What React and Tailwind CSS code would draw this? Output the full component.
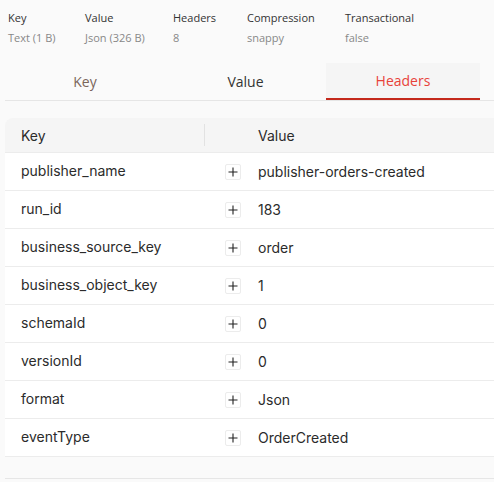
const meta = [
  { label: "Key", value: "Text (1 B)", w: "w-[77px]" },
  { label: "Value", value: "Json (326 B)", w: "w-[88px]" },
  { label: "Headers", value: "8", w: "w-[74px]" },
  { label: "Compression", value: "snappy", w: "w-[98px]" },
  { label: "Transactional", value: "false", w: "w-[100px]" },
];

const headers = [
  ["publisher_name", "publisher-orders-created"],
  ["run_id", "183"],
  ["business_source_key", "order"],
  ["business_object_key", "1"],
  ["schemaId", "0"],
  ["versionId", "0"],
  ["format", "Json"],
  ["eventType", "OrderCreated"],
];

const PlusBox = () => (
  <span className="flex h-[16px] w-[16px] items-center justify-center rounded-[2px] border border-[#ececec] bg-white">
    <svg width="10" height="10" viewBox="0 0 10 10">
      <path d="M5 0.5v9M0.5 5h9" stroke="#222" strokeWidth="1.1" />
    </svg>
  </span>
);

export default function App() {
  return (
    <div className="h-[482px] w-[494px] overflow-hidden bg-[#fafafa]">
      {/* message meta */}
      <div className="flex pl-[8px] pt-[10px] font-['Open_Sans',sans-serif] text-[11px]">
        {meta.map((m) => (
          <div key={m.label} className={m.w}>
            <div className="leading-[16px] text-[#333] font-medium">{m.label}</div>
            <div className="mt-[4px] leading-[16px] text-[#888]">{m.value}</div>
          </div>
        ))}
      </div>

      {/* tabs */}
      <div className="ml-[5px] mt-[17px] flex h-[38px] border-b border-[#e6e6e6] font-['Open_Sans',sans-serif] text-[14px]">
        <div className="flex w-[160px] items-center justify-center text-[#7a665a]">Key</div>
        <div className="flex w-[161px] items-center justify-center text-[#333]">Value</div>
        <div className="flex w-[154px] items-center justify-center border-b-[2px] border-[#c4291c] bg-[#f5f5f5] text-[#e8423a]">
          Headers
        </div>
      </div>

      {/* headers table */}
      <div className="ml-[5px] mt-[17px] font-['Inter',sans-serif] text-[14px] text-[#2b2b2b]">
        <div className="flex h-[35px] items-center rounded-tl-[8px] border-b border-[#ececec] bg-[#f5f5f5]">
          <div className="w-[199px] pl-[16px]">Key</div>
          <div className="h-[22px] w-px bg-[#e2e2e2]" />
          <div className="pl-[53px]">Value</div>
        </div>
        <div className="bg-white">
          {headers.map(([k, v]) => (
            <div key={k} className="flex h-[38px] items-center border-b border-[#ececec]">
              <div className="w-[199px] pb-[2px] pl-[16px]">{k}</div>
              <div className="flex w-[54px] justify-center pl-[4px]">
                <PlusBox />
              </div>
              <div>{v}</div>
            </div>
          ))}
        </div>
        <div className="h-[22px] border-b border-[#e6e6e6]" />
      </div>
    </div>
  );
}
